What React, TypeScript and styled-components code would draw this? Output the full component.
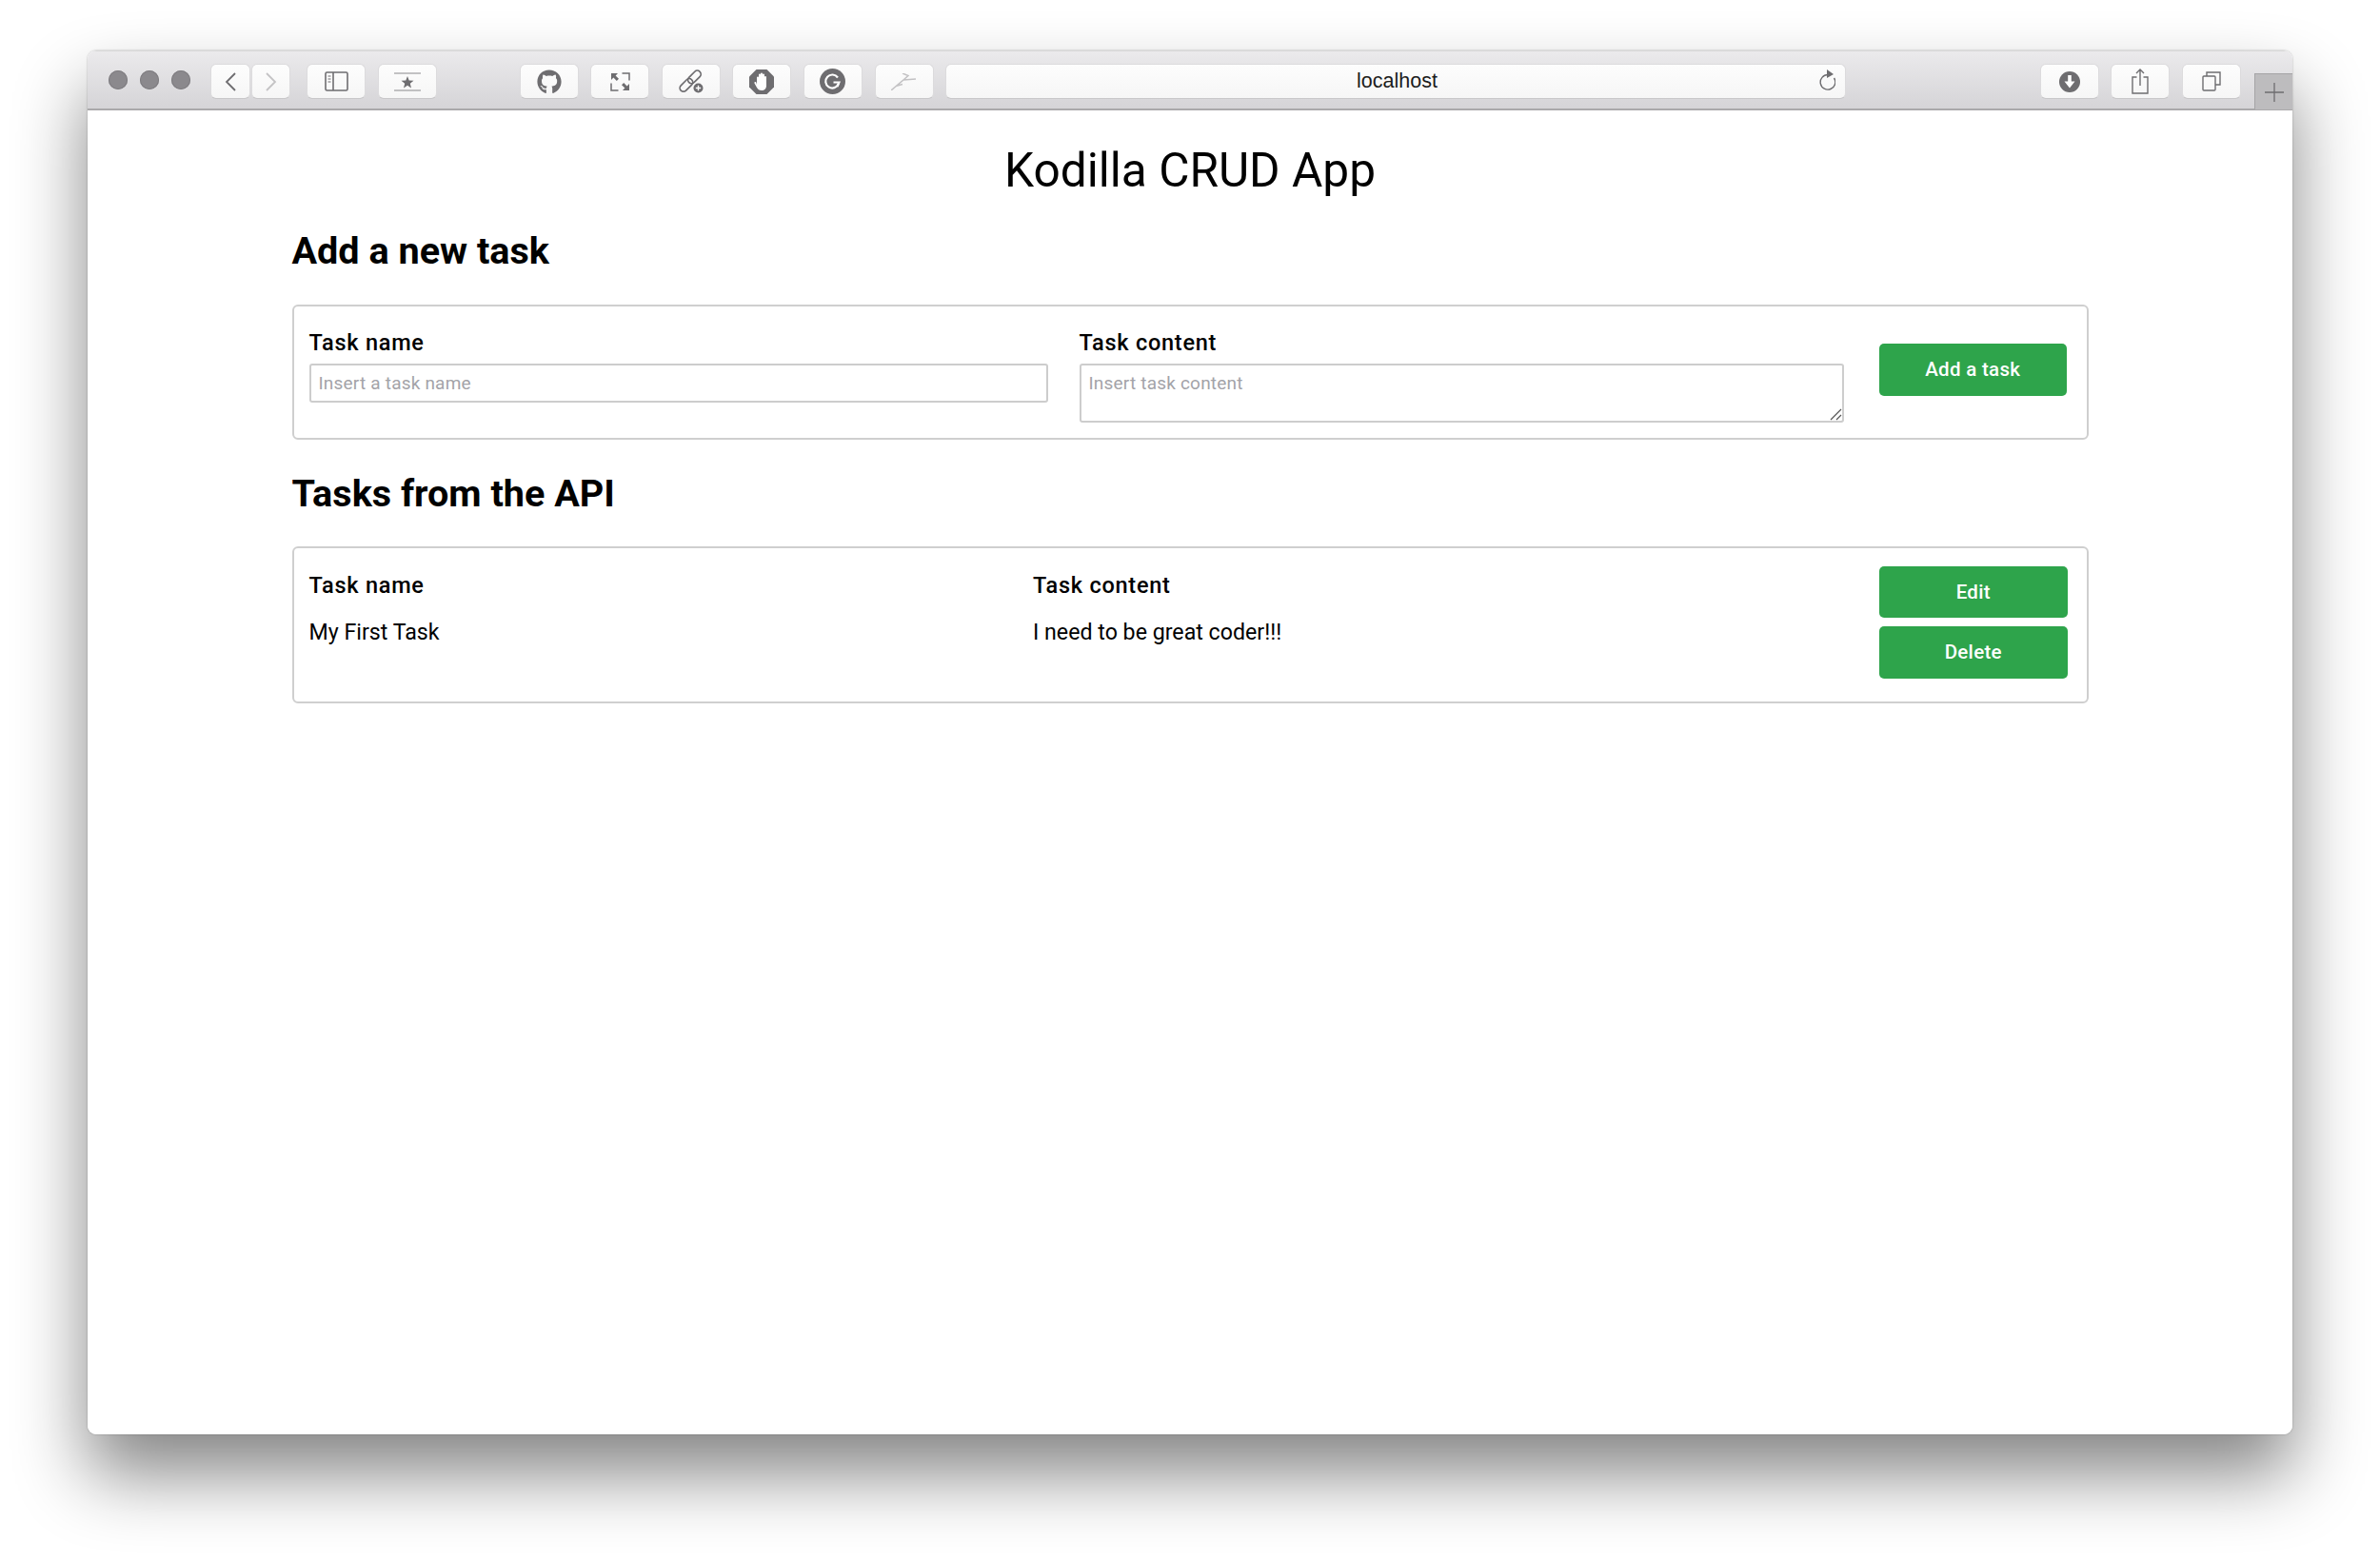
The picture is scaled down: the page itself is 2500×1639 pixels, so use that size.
import React from 'react';
import styled, { createGlobalStyle } from 'styled-components';
import { FaGithub } from 'react-icons/fa';

const GlobalStyle = createGlobalStyle`
  html, body {
    margin: 0;
    background: #fff;
  }
  body {
    font-family: Roboto, "Liberation Sans", sans-serif;
    color: #000;
    overflow: hidden;
  }
`;

const Page = styled.div`
  width: 2500px;
  height: 1639px;
  box-sizing: border-box;
  padding: 53px 92px 0;
`;

const BrowserWindow = styled.div`
  height: 1454px;
  background: #fff;
  border-radius: 9px;
  overflow: hidden;
  display: flex;
  flex-direction: column;
`;

const WindowShadow = styled.div`
  border-radius: 9px;
  box-shadow: 0 42px 76px rgba(0, 0, 0, 0.48), 0 0 2px rgba(0, 0, 0, 0.3);
`;

const Toolbar = styled.div`
  height: 63px;
  flex: none;
  display: flex;
  align-items: flex-start;
  padding: 13px 0 0 22px;
  box-sizing: border-box;
  background: linear-gradient(#ebeaec, #d5d4d7);
  border-top: 1px solid #d8d8d8;
  border-bottom: 2px solid #aaa9ab;
`;

const ToolGroup = styled.div<{ $left?: number; $gap?: number }>`
  display: flex;
  flex: none;
  gap: ${(p) => p.$gap ?? 12.6}px;
  margin-left: ${(p) => p.$left ?? 0}px;
`;

const Lights = styled(ToolGroup)`
  padding-top: 7px;
`;

const Light = styled.span`
  width: 20px;
  height: 20px;
  border-radius: 50%;
  background: #8b898d;
  box-shadow: inset 0 0 0 1px #7f7d81;
`;

const ToolButton = styled.div<{ $width?: number }>`
  width: ${(p) => p.$width ?? 62}px;
  height: 37px;
  box-sizing: border-box;
  display: flex;
  align-items: center;
  justify-content: center;
  background: linear-gradient(#fdfdfd, #f6f6f6);
  border: 1px solid #dcdbdd;
  border-bottom-color: #c8c7c9;
  border-radius: 6px;
  color: #6e6d70;
`;

const AddressBar = styled(ToolButton)`
  position: relative;
  margin-left: 12.6px;
  padding-left: 3px;
  font-family: "Liberation Sans", Arial, sans-serif;
  font-size: 21.5px;
  color: #1c1c1c;
`;

const ReloadSlot = styled.span`
  position: absolute;
  right: 10px;
  top: 5px;
  display: flex;
`;

const NewTab = styled.div`
  width: 40px;
  height: 38px;
  flex: none;
  box-sizing: border-box;
  margin: 10px 0 0 14px;
  display: flex;
  align-items: center;
  justify-content: center;
  background: #bdbcbe;
  border-left: 1px solid #a5a4a6;
  border-top: 1px solid #a5a4a6;
`;

const Content = styled.main`
  flex: 1;
  padding: 0 214.5px;
`;

const Title = styled.h1`
  margin: 0;
  padding-top: 33px;
  height: 122px;
  box-sizing: border-box;
  text-align: center;
  font-size: 49.6px;
  line-height: 60px;
  font-weight: 400;
`;

const SectionTitle = styled.h2<{ $height: number }>`
  margin: 0;
  height: ${(p) => p.$height}px;
  font-size: 39.6px;
  line-height: 52px;
  font-weight: 700;
`;

const Card = styled.section`
  box-sizing: border-box;
  border: 2px solid #cfcfcf;
  border-radius: 6px;
  display: flex;
`;

const FormCard = styled(Card)`
  height: 142.5px;
  margin-bottom: 31px;
  padding: 24px 20px 0 16px;
`;

const ListCard = styled(Card)`
  height: 165.5px;
  padding: 19px 20px 0 16px;
`;

const Field = styled.div<{ $width: number; $left?: number }>`
  width: ${(p) => p.$width}px;
  margin-left: ${(p) => p.$left ?? 0}px;
  flex: none;
`;

const Label = styled.label`
  display: block;
  font-size: 23.5px;
  line-height: 28px;
  font-weight: 500;
  letter-spacing: 0.75px;
  margin-bottom: 8px;
`;

const fieldStyles = `
  display: block;
  width: 100%;
  box-sizing: border-box;
  border: 2px solid #cdcdcd;
  border-radius: 3px;
  background: #fff;
  padding: 0 8px;
  font-family: Roboto, "Liberation Sans", sans-serif;
  font-size: 19px;
  letter-spacing: 0.2px;
  outline: none;
  &::placeholder { color: #a3a3a8; opacity: 1; }
`;

const TextInput = styled.input`
  ${fieldStyles}
  height: 41px;
`;

const TextAreaWrap = styled.div`
  position: relative;
`;

const TextArea = styled.textarea`
  ${fieldStyles}
  height: 62px;
  padding-top: 7px;
  line-height: 23px;
  resize: none;
`;

const Grip = styled.svg`
  position: absolute;
  right: 2px;
  bottom: 2px;
  display: block;
`;

const GreenButton = styled.button`
  display: block;
  width: 197.5px;
  height: 54.5px;
  flex: none;
  border: none;
  border-radius: 5px;
  background: #2ea44b;
  color: #fff;
  font-family: Roboto, "Liberation Sans", sans-serif;
  font-size: 20.5px;
  font-weight: 500;
  letter-spacing: 0.3px;
`;

const AddButton = styled(GreenButton)`
  margin: 15.5px 0 0 37px;
`;

const Column = styled.div<{ $width: number }>`
  width: ${(p) => p.$width}px;
  flex: none;
  padding-top: 6px;
`;

const ColumnHead = styled.div`
  font-size: 23.5px;
  line-height: 28px;
  font-weight: 500;
  letter-spacing: 0.75px;
  margin-bottom: 21px;
`;

const ColumnValue = styled.div`
  font-size: 23.2px;
  line-height: 28px;
`;

const Actions = styled.div`
  display: flex;
  flex-direction: column;
  gap: 9px;
`;

const Icon = styled.svg`
  display: block;
  flex: none;
`;

const HandIcon = () => (
  <Icon width="26" height="26" viewBox="0 0 26 26">
    <polygon points="7.5,0 18.5,0 26,7.5 26,18.5 18.5,26 7.5,26 0,18.5 0,7.5" fill="#6e6d70" />
    <path
      d="M8 14V8.5a1 1 0 0 1 2 0V13V5.5a1 1 0 0 1 2 0V12V4.5a1 1 0 0 1 2 0V12V5.5a1 1 0 0 1 2 0V13V8a1 1 0 0 1 2 0v9c0 3-2 5-5 5-2.5 0-3.8-1-5-3l-2.5-4.5c-.6-1.2 1-2 1.8-1L8 16z"
      fill="#fff"
    />
  </Icon>
);

const GrammarIcon = () => (
  <Icon width="27" height="27" viewBox="0 0 27 27">
    <circle cx="13.5" cy="13.5" r="13.5" fill="#6e6d70" />
    <path d="M19 9.5a7 7 0 1 0 .8 6.5" fill="none" stroke="#fff" strokeWidth="2.2" />
    <path d="M14.5 14.5h6l-2 4.5" fill="none" stroke="#fff" strokeWidth="2" />
  </Icon>
);

const LinkPlusIcon = () => (
  <Icon width="28" height="27" viewBox="0 0 28 27">
    <g fill="none" stroke="#6e6d70" strokeWidth="1.7" transform="rotate(-45 13 13)">
      <rect x="-1" y="9.5" width="16" height="7.5" rx="3.7" />
      <rect x="11" y="9.5" width="16" height="7.5" rx="3.7" />
    </g>
    <circle cx="21.5" cy="20.5" r="6.5" fill="#f9f9f9" />
    <circle cx="21.5" cy="20.5" r="5" fill="#6e6d70" />
    <path d="M21.5 17.8v5.4M18.8 20.5h5.4" stroke="#fff" strokeWidth="1.4" />
  </Icon>
);

const DownloadIcon = () => (
  <Icon width="22" height="22" viewBox="0 0 22 22">
    <circle cx="11" cy="11" r="11" fill="#6e6d70" />
    <path d="M9.2 4h3.6v6.5h3.7L11 17.5 5.5 10.5h3.7z" fill="#fff" />
  </Icon>
);

export default function App() {
  return (
    <Page>
      <GlobalStyle />
      <WindowShadow>
        <BrowserWindow>
          <Toolbar>
            <Lights $gap={13}>
              <Light />
              <Light />
              <Light />
            </Lights>
            <ToolGroup $left={21} $gap={1}>
              <ToolButton $width={42}>
                <Icon width="12" height="20" viewBox="0 0 12 20">
                  <path d="M11 1 2 10l9 9" fill="none" stroke="#6e6d70" strokeWidth="1.8" />
                </Icon>
              </ToolButton>
              <ToolButton $width={41}>
                <Icon width="12" height="20" viewBox="0 0 12 20">
                  <path d="m1 1 9 9-9 9" fill="none" stroke="#c4c3c5" strokeWidth="1.8" />
                </Icon>
              </ToolButton>
            </ToolGroup>
            <ToolGroup $left={17}>
              <ToolButton>
                <Icon width="25" height="21" viewBox="0 0 25 21">
                  <rect x="1" y="1" width="23" height="19" rx="1.5" fill="none" stroke="#6e6d70" strokeWidth="1.6" />
                  <path d="M9 1v19" stroke="#6e6d70" strokeWidth="1.6" />
                  <path d="M3.5 5h3M3.5 8h3M3.5 11h3" stroke="#6e6d70" strokeWidth="1.2" />
                </Icon>
              </ToolButton>
              <ToolButton>
                <Icon width="28" height="20" viewBox="0 0 28 20">
                  <path d="M0 1h28M0 19h28" stroke="#8a898c" strokeWidth="1" />
                  <polygon points="14,4 15.7,8.6 20.5,8.8 16.8,11.8 18,16.4 14,13.8 10,16.4 11.2,11.8 7.5,8.8 12.3,8.6" fill="#6e6d70" />
                </Icon>
              </ToolButton>
            </ToolGroup>
            <ToolGroup $left={87}>
              <ToolButton>
                <FaGithub size={26} color="#6e6d70" />
              </ToolButton>
              <ToolButton>
                <Icon width="21" height="20" viewBox="0 0 21 20">
                  <path d="M12.5 1H20v7.5M8.5 19H1v-7.5" fill="none" stroke="#6e6d70" strokeWidth="1.5" />
                  <path d="M1 1h7L5.6 3.4 9 6.8 6.8 9 3.4 5.6 1 8zM20 19h-7l2.4-2.4-3.4-3.4 2.2-2.2 3.4 3.4L20 12z" fill="#6e6d70" />
                </Icon>
              </ToolButton>
              <ToolButton>
                <LinkPlusIcon />
              </ToolButton>
              <ToolButton>
                <HandIcon />
              </ToolButton>
              <ToolButton>
                <GrammarIcon />
              </ToolButton>
              <ToolButton>
                <Icon width="27" height="18" viewBox="0 0 27 18">
                  <path d="M0 18 13 7l13-1M12 0l6 2.5-5 4.5M5 13.5l7-2" fill="none" stroke="#c3c2c4" strokeWidth="1.5" />
                </Icon>
              </ToolButton>
            </ToolGroup>
            <AddressBar $width={947}>
              localhost
              <ReloadSlot>
                <Icon width="18" height="24" viewBox="0 0 18 24">
                  <path d="M10 5.5a7.8 7.8 0 1 0 6.5 3.5" fill="none" stroke="#6e6d70" strokeWidth="1.4" />
                  <polygon points="9,0 16,5 9,9" fill="#6e6d70" />
                </Icon>
              </ReloadSlot>
            </AddressBar>
            <ToolGroup $left={204}>
              <ToolButton>
                <DownloadIcon />
              </ToolButton>
              <ToolButton>
                <Icon width="18" height="27" viewBox="0 0 18 27">
                  <path d="M5.5 9H1v17h16V9h-4.5" fill="none" stroke="#6e6d70" strokeWidth="1.4" />
                  <path d="M9 18V1M5 5l4-4 4 4" fill="none" stroke="#6e6d70" strokeWidth="1.4" />
                </Icon>
              </ToolButton>
              <ToolButton>
                <Icon width="20" height="21" viewBox="0 0 20 21">
                  <rect x="1" y="5" width="13" height="15" rx="1" fill="none" stroke="#6e6d70" strokeWidth="1.4" />
                  <path d="M5 5V1h14v13h-5" fill="none" stroke="#6e6d70" strokeWidth="1.4" />
                </Icon>
              </ToolButton>
            </ToolGroup>
            <NewTab>
              <Icon width="20" height="20" viewBox="0 0 20 20">
                <path d="M10 0v20M0 10h20" stroke="#6e6d70" strokeWidth="1.3" />
              </Icon>
            </NewTab>
          </Toolbar>
          <Content>
            <Title>Kodilla CRUD App</Title>
            <SectionTitle $height={81.5}>Add a new task</SectionTitle>
            <FormCard>
              <Field $width={776}>
                <Label>Task name</Label>
                <TextInput placeholder="Insert a task name" />
              </Field>
              <Field $width={803} $left={33}>
                <Label>Task content</Label>
                <TextAreaWrap>
                  <TextArea placeholder="Insert task content" />
                  <Grip width="13" height="13" viewBox="0 0 13 13">
                    <path d="M1 12 12 1M7 12l5-5" stroke="#555" strokeWidth="1.2" />
                  </Grip>
                </TextAreaWrap>
              </Field>
              <AddButton>Add a task</AddButton>
            </FormCard>
            <SectionTitle $height={80.5}>Tasks from the API</SectionTitle>
            <ListCard>
              <Column $width={760.5}>
                <ColumnHead>Task name</ColumnHead>
                <ColumnValue>My First Task</ColumnValue>
              </Column>
              <Column $width={889}>
                <ColumnHead>Task content</ColumnHead>
                <ColumnValue>I need to be great coder!!!</ColumnValue>
              </Column>
              <Actions>
                <GreenButton>Edit</GreenButton>
                <GreenButton>Delete</GreenButton>
              </Actions>
            </ListCard>
          </Content>
        </BrowserWindow>
      </WindowShadow>
    </Page>
  );
}
